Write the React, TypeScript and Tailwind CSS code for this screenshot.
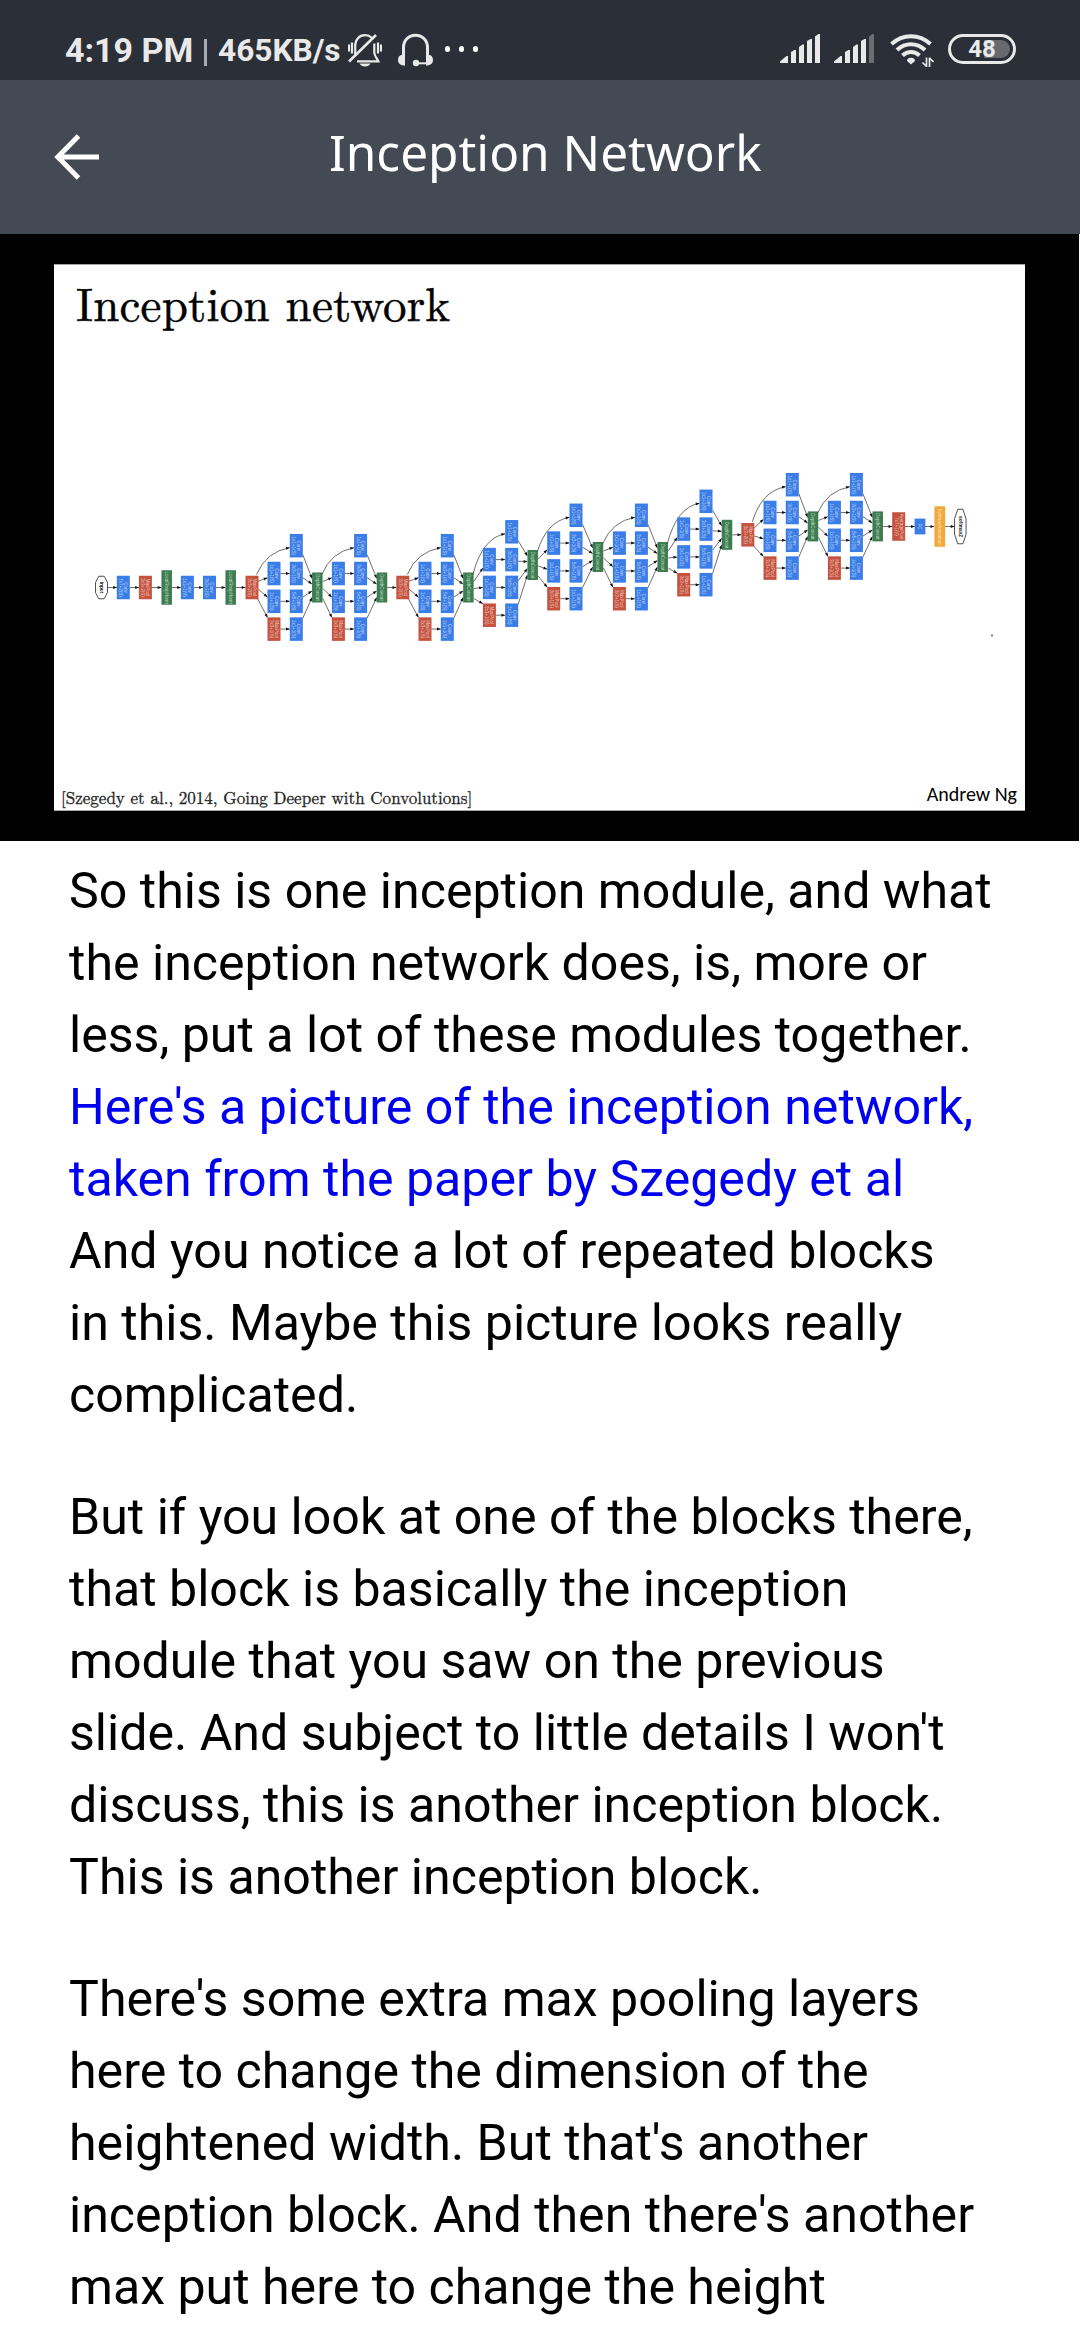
type Point = [number, number]

const BLUE = '#3b7de6'
const RED = '#c5523d'
const GREEN = '#3c7d4f'
const ORANGE = '#f1a93b'

function StatusBar() {
  return (
    <div className="flex h-20 items-start bg-[#2b2f37] pt-[33px] pl-[65px] font-['Roboto',sans-serif] font-bold text-[#e9e9e9]">
      <span className="w-[139px] text-[34px] leading-[34px] whitespace-nowrap">4:19 PM</span>
      <span className="mt-1.5 h-[27px] w-[3px] bg-[#a9abae]" />
      <span className="mt-px ml-[11px] w-[130px] text-[31.6px] leading-[34px] whitespace-nowrap">465KB/s</span>
      <MutedBellIcon />
      <HeadsetIcon />
      <span className="mt-[13px] ml-3 flex gap-[9px]">
        <i className="h-1.5 w-[5px] rounded-full bg-white" />
        <i className="h-1.5 w-[5px] rounded-full bg-white" />
        <i className="h-1.5 w-[5px] rounded-full bg-white" />
      </span>
      <div className="mr-16 ml-auto flex">
        <SignalIcon last="#e9e9e9" />
        <span className="w-3.5" />
        <SignalIcon last="#6a6d72" />
        <WifiIcon />
        <div className="relative mt-px flex h-[30px] w-[68px] items-center justify-center rounded-full border-[3px] border-[#e9e9e9]">
          <span className="absolute top-[3px] right-[3px] h-[18px] w-[26px] rounded-r-full bg-[#66696e]" />
          <span className="relative text-[24px] leading-6">48</span>
        </div>
      </div>
    </div>
  )
}

function MutedBellIcon() {
  return (
    <svg width="34" height="34" viewBox="0 0 34 34" fill="none" stroke="#e9e9e9" strokeWidth="2.200">
      <path d="M7.200 22V13c0-6.500 4-10.800 9.800-10.800 2.700 0 5 .9 6.700 2.500M26.300 10.500V19.500c0 3.500 2.500 5.500 4 8.800H9" />
      <path d="M1 28.500 28 2" strokeWidth="2.600" />
      <path d="M1 11.500v7M4 9.500v11M30 9.500v11M33 11.500v7" />
      <path d="M11.500 30.500h11c-1 1.800-3 3-5.500 3s-4.500-1.200-5.500-3z" fill="#e9e9e9" stroke="none" />
    </svg>
  )
}

function HeadsetIcon() {
  return (
    <svg className="ml-4" width="35" height="34" viewBox="0 0 35 34" fill="none" stroke="#e9e9e9">
      <path d="M5.500 24V14.500C5.500 7.500 10.500 2.300 17.500 2.300s12 5.200 12 12.200V24" strokeWidth="3" />
      <path d="M18 30.300h12" strokeWidth="2" />
      <g fill="#e9e9e9" stroke="none">
        <path d="M4 22h3v10.500c-4 0-7-1.500-7-5.500 0-3 1.500-5 4-5zM31 22h-3v10.500c4 0 7-1.500 7-5.500 0-3-1.500-5-4-5z" />
        <circle cx="18" cy="30" r="3.200" />
      </g>
    </svg>
  )
}

function SignalIcon({ last }: { last: string }) {
  return (
    <svg className="mt-px" width="40" height="30" viewBox="0 0 40 30" fill="#e9e9e9">
      <path d="M0 29v-1.500L6.500 22H8v7zM11 29V18l3.500-2H16v13zM19 29V13l3.500-2.500H24V29zM27 29V7l3.500-2H32v24z" />
      <path d="M35 29V2.500L38.500 0H40v29z" fill={last} />
    </svg>
  )
}

function WifiIcon() {
  return (
    <svg className="mr-3.5 ml-4" width="44" height="35" viewBox="0 0 44 35" fill="none" stroke="#e9e9e9" strokeWidth="4">
      <path d="M1.500 11C7 6 13.500 3.200 21 3.200S35 6 40.500 11" />
      <path d="M7 17c4-3.700 8.500-5.800 14-5.800S31 13.300 35 17" />
      <path d="M12.500 22.500c2.500-2.300 5.200-3.500 8.500-3.500s6 1.200 8.500 3.500" />
      <path d="M17 28c0-2 1.500-3.200 4-3.200s4 1.200 4 3.200l-4 3.500z" fill="#e9e9e9" stroke="none" />
      <path d="M36.500 24.500v9.500M32.500 29.500l4 4M39.500 34v-9.500M43.500 29l-4-4" strokeWidth="1.700" />
    </svg>
  )
}

function Header() {
  return (
    <div className="flex h-[154px] items-center bg-[#444a53]">
      <svg className="ml-[54px]" width="46" height="46" viewBox="0 0 46 46" fill="none" stroke="#fff" strokeWidth="5">
        <path d="M4 23H45M24.500 2 3.800 23 24.500 44" />
      </svg>
      <h1 className="-mt-[11px] ml-[229px] font-['Noto_Sans',sans-serif] text-[49.5px] leading-[68px] whitespace-nowrap text-white">
        Inception Network
      </h1>
    </div>
  )
}

function Arrow({ from, to, bend }: { from: Point; to: Point; bend?: Point }) {
  const [x, y] = to
  const start = bend ?? from
  const angle = (Math.atan2(y - start[1], x - start[0]) * 180) / Math.PI
  const mid = bend ? `Q${bend[0]} ${bend[1]}` : 'L'
  return (
    <g>
      <path d={`M${from[0]} ${from[1]}${mid} ${x} ${y}`} fill="none" stroke="#4a4a4a" strokeWidth="0.8" />
      <path d="M0 0-3.800-1.500V1.500z" fill="#111" transform={`translate(${x} ${y}) rotate(${angle})`} />
    </g>
  )
}

// Labels are turned clockwise, so the first line ends up on the right of the box.
function Box({ x, y, w = 13, h = 23.5, fill, lines }: { x: number; y: number; w?: number; h?: number; fill: string; lines: string[] }) {
  return (
    <g>
      <rect x={x - w / 2} y={y - h / 2} width={w} height={h} fill={fill} />
      <g transform={`translate(${x} ${y}) rotate(90)`} fill="#fff" fillOpacity="0.7" fontSize="4.500" textAnchor="middle">
        {lines.map((line, i) => (
          <text key={line} y={1.6 + (i - (lines.length - 1) / 2) * 5}>
            {line}
          </text>
        ))}
      </g>
    </g>
  )
}

const Conv = ({ x, y, k }: { x: number; y: number; k: string }) => <Box x={x} y={y} fill={BLUE} lines={['Conv', k]} />
const MaxPool = ({ x, y, k = '3x3+2(S)' }: { x: number; y: number; k?: string }) => (
  <Box x={x} y={y} fill={RED} lines={['MaxPool', k]} />
)
const Norm = ({ x, y }: { x: number; y: number }) => <Box x={x} y={y} w={10.5} h={34.5} fill={GREEN} lines={['LocalRespNorm']} />
const Concat = ({ x, y }: { x: number; y: number }) => <Box x={x} y={y} w={10.5} h={30} fill={GREEN} lines={['DepthConcat']} />

interface Module {
  src: Point
  c1: number
  c2: number
  top: number
  out: Point
}

const modules: Module[] = [
  { src: [252, 587.5], c1: 274, c2: 296.3, top: 545.7, out: [317.3, 587.5] },
  { src: [317.3, 587.5], c1: 338.4, c2: 360.6, top: 545.7, out: [382, 587.5] },
  { src: [402.8, 587.5], c1: 425, c2: 447.3, top: 545.7, out: [468.4, 587.5] },
  { src: [468.4, 587.5], c1: 489.4, c2: 511.7, top: 531.8, out: [532.7, 565] },
  { src: [532.7, 565], c1: 553.7, c2: 576, top: 515.3, out: [598, 557] },
  { src: [598, 557], c1: 619.4, c2: 641.4, top: 515.3, out: [662.7, 557] },
  { src: [662.7, 557], c1: 683.7, c2: 706, top: 501.3, out: [727, 534.8] },
  { src: [747.8, 534.8], c1: 770, c2: 792.3, top: 484.7, out: [813, 526.4] },
  { src: [813, 526.4], c1: 834.4, c2: 856.4, top: 484.7, out: [877.7, 526.4] },
]

function InceptionModule({ src, c1, c2, top, out }: Module) {
  const rows = [top, top + 27.8, top + 55.6, top + 83.4]
  const sx = src[0] + 5.5
  return (
    <g>
      <Arrow from={[src[0] + 4.5, src[1] - 13]} bend={[src[0] + 14, rows[0] + 6]} to={[c2 - 6.5, rows[0] + 2]} />
      {[1, 2, 3].map((i) => (
        <g key={i}>
          <Arrow from={[sx, src[1] + (i - 2) * 7 + (i === 3 ? 4 : 1)]} to={[c1 - 6.5, i === 3 ? rows[3] - 11.5 : rows[i] + (src[1] - rows[i]) * 0.3]} />
          <Arrow from={[c1 + 6.5, rows[i]]} to={[c2 - 6.5, rows[i]]} />
        </g>
      ))}
      {rows.map((y, i) => (
        <Arrow key={y} from={[c2 + 6.5, y + (i === 0 ? 9 : i === 3 ? -11 : (out[1] - y) * 0.3)]} to={[out[0] - 5.3, out[1] + [-9, -3.5, 3.5, 10][i]]} />
      ))}
      <Conv x={c2} y={rows[0]} k="1x1+1(S)" />
      <Conv x={c1} y={rows[1]} k="1x1+1(S)" />
      <Conv x={c1} y={rows[2]} k="1x1+1(S)" />
      <MaxPool x={c1} y={rows[3]} k="3x3+1(S)" />
      <Conv x={c2} y={rows[1]} k="3x3+1(S)" />
      <Conv x={c2} y={rows[2]} k="5x5+1(S)" />
      <Conv x={c2} y={rows[3]} k="1x1+1(S)" />
      <Concat x={out[0]} y={out[1]} />
    </g>
  )
}

function Terminal({ x, y, w, h, label }: { x: number; y: number; w: number; h: number; label: string }) {
  const a = w / 2
  const b = h / 2
  return (
    <g transform={`translate(${x} ${y})`}>
      <path
        d={`M${-a} ${-b * 0.45}L${-a * 0.45} ${-b}H${a * 0.45}L${a} ${-b * 0.45}V${b * 0.45}L${a * 0.45} ${b}H${-a * 0.45}L${-a} ${b * 0.45}z`}
        fill="#fff"
        stroke="#222"
        strokeWidth="0.8"
      />
      <text transform="rotate(90)" y="1.600" fontSize="4.800" fontWeight="bold" textAnchor="middle" fill="#222">
        {label}
      </text>
    </g>
  )
}

function NetworkDiagram() {
  return (
    <svg className="w-[971px]" height="200" viewBox="54 460 971 200" fontFamily="Liberation Sans, sans-serif">
      <Terminal x={101.5} y={587.5} w={12} h={22.5} label="input" />
      <Arrow from={[107.5, 587.5]} to={[117, 587.5]} />
      <Arrow from={[130, 587.5]} to={[139, 587.5]} />
      <Arrow from={[152, 587.5]} to={[161.5, 587.5]} />
      <Arrow from={[172, 587.5]} to={[181, 587.5]} />
      <Arrow from={[194, 587.5]} to={[203, 587.5]} />
      <Arrow from={[216, 587.5]} to={[225.5, 587.5]} />
      <Arrow from={[236, 587.5]} to={[245.5, 587.5]} />
      <Conv x={123.3} y={587.5} k="7x7+2(S)" />
      <MaxPool x={145.4} y={587.5} />
      <Norm x={166.7} y={587.5} />
      <Conv x={187.4} y={587.5} k="1x1+1(V)" />
      <Conv x={209.5} y={587.5} k="3x3+1(S)" />
      <Norm x={230.7} y={587.5} />
      {modules.map((m) => (
        <InceptionModule key={m.c1} {...m} />
      ))}
      <Arrow from={[387.3, 587.5]} to={[396.3, 587.5]} />
      <Arrow from={[732.3, 534.8]} to={[741.3, 534.8]} />
      <MaxPool x={252} y={587.5} />
      <MaxPool x={402.8} y={587.5} />
      <MaxPool x={747.8} y={534.8} />
      <Arrow from={[883, 526.5]} to={[892.3, 526.5]} />
      <Arrow from={[905, 526.5]} to={[914.8, 526.5]} />
      <Arrow from={[925, 526.5]} to={[934.3, 526.5]} />
      <Arrow from={[945, 526.5]} to={[954.5, 526.5]} />
      <Box x={898.7} y={526.5} h={28.5} fill={RED} lines={['AveragePool', '7x7+1(V)']} />
      <Box x={920} y={526.5} w={10.8} h={15.8} fill={BLUE} lines={['FC']} />
      <Box x={939.8} y={526.5} w={10.8} h={40.5} fill={ORANGE} lines={['SoftmaxActivation']} />
      <Terminal x={960.3} y={526.5} w={11.5} h={34.5} label="softmax2" />
      <circle cx="992" cy="635.500" r="1" fill="#666" />
    </svg>
  )
}

function Slide() {
  return (
    <div className="mr-px h-[607px] bg-black pt-[30px] pl-[54px]">
      <div className="flex h-[547px] w-[971px] flex-col border-y border-[#a5a5a5] bg-white font-['Latin_Modern_Roman','Liberation_Serif',serif] text-black">
        <h2 className="mt-[7px] ml-[22px] h-[60px] text-[47px] leading-[60px] tracking-[0.2px] whitespace-nowrap [-webkit-text-stroke:0.5px_black]">
          Inception network
        </h2>
        <div className="mt-[128px]">
          <NetworkDiagram />
        </div>
        <div className="mt-auto flex items-end justify-between pr-[8px] pl-[7px] leading-6">
          <span className="mb-px text-[17.05px] whitespace-nowrap text-[#222] [-webkit-text-stroke:0.3px_#222]">
            [Szegedy et al., 2014, Going Deeper with Convolutions]
          </span>
          <span className="mb-[4px] font-['Carlito','Lato',sans-serif] text-[20px]">Andrew Ng</span>
        </div>
      </div>
    </div>
  )
}

function Transcript() {
  return (
    <div className="flex flex-col gap-[50px] pt-3.5 pl-[69px] font-['Roboto',sans-serif] text-[50.1px] leading-[72px] whitespace-nowrap text-black">
      <p>
        So this is one inception module, and what
        <br />
        the inception network does, is, more or
        <br />
        less, put a lot of these modules together.
        <br />
        <span className="text-[#0000ee]">
          Here's a picture of the inception network,
          <br />
          taken from the paper by Szegedy et al
        </span>
        <br />
        And you notice a lot of repeated blocks
        <br />
        in this. Maybe this picture looks really
        <br />
        complicated.
      </p>
      <p>
        But if you look at one of the blocks there,
        <br />
        that block is basically the inception
        <br />
        module that you saw on the previous
        <br />
        slide. And subject to little details I won't
        <br />
        discuss, this is another inception block.
        <br />
        This is another inception block.
      </p>
      <p>
        There's some extra max pooling layers
        <br />
        here to change the dimension of the
        <br />
        heightened width. But that's another
        <br />
        inception block. And then there's another
        <br />
        max put here to change the height
      </p>
    </div>
  )
}

export default function App() {
  return (
    <div className="h-[2340px] w-[1080px] overflow-hidden bg-white">
      <StatusBar />
      <Header />
      <Slide />
      <Transcript />
    </div>
  )
}
